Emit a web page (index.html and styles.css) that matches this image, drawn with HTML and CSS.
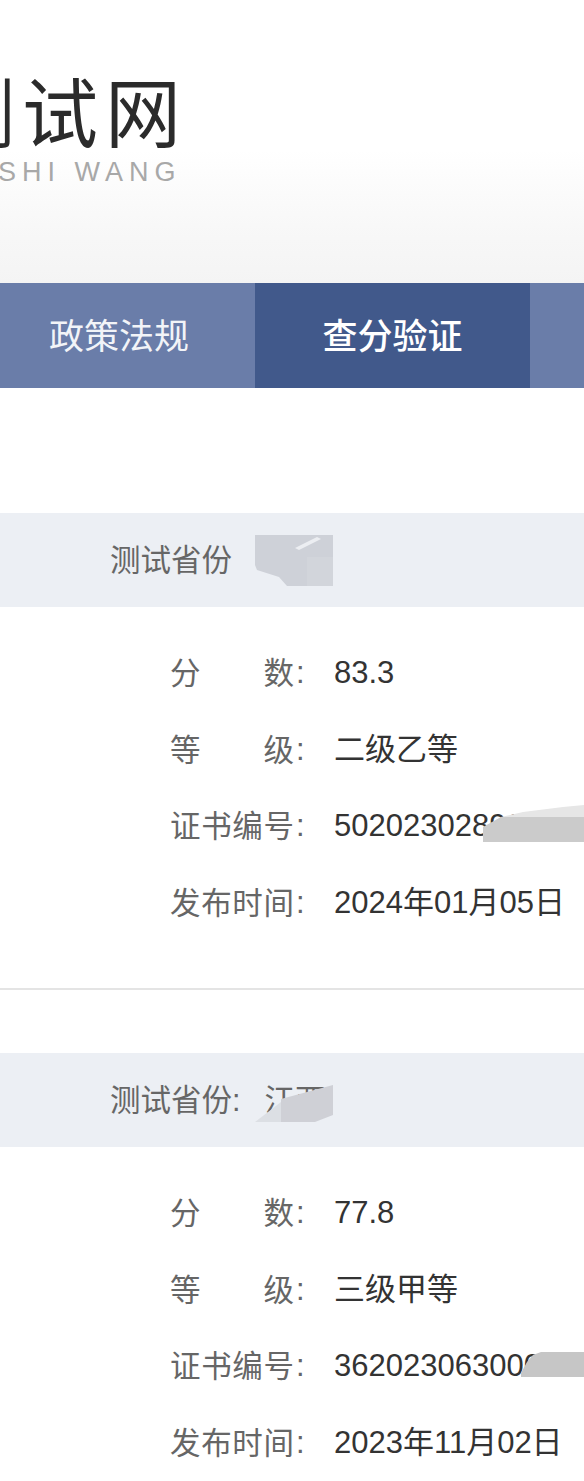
FILE: index.html
```html
<!DOCTYPE html>
<html lang="zh-CN">
<head>
  <meta charset="UTF-8">
  <title>查分验证</title>
  <link rel="stylesheet" href="styles.css">
</head>
<body>
  <div class="header">
    <div class="logo">测试网</div>
    <div class="logo-en">SHI WANG</div>
  </div>

  <div class="nav">
    <div class="tab tab-first">政策法规</div>
    <div class="tab active">查分验证</div>
    <div class="tab tab-rest"></div>
  </div>

  <div class="result first">
    <div class="band">
      测试省份
      <svg class="blot blot-a" width="78" height="51">
        <polygon points="0,0 78,0 78,51 32,51 24,42 2,35 0,30" fill="#ced1d8"/>
        <polygon points="52,22 78,22 78,51 52,51" fill="#d2d5db"/>
        <polygon points="40,13 62,2 66,4 44,15" fill="#eceef2"/>
      </svg>
    </div>
    <div class="rows">
      <div class="row"><span class="label">分数</span><span class="colon">:</span><span class="value">83.3</span></div>
      <div class="row"><span class="label">等级</span><span class="colon">:</span><span class="value">二级乙等</span></div>
      <div class="row">
        <span class="label">证书编号</span><span class="colon">:</span><span class="value">50202302890000</span>
        <svg class="blot blot-b" width="101" height="37">
          <polygon points="0,22 18,12 40,7 80,2 101,0 101,12 18,12" fill="#e6e6e6"/>
          <polygon points="0,22 18,12 101,12 101,37 0,37" fill="#cbcbcb"/>
        </svg>
      </div>
      <div class="row"><span class="label">发布时间</span><span class="colon">:</span><span class="value">2024年01月05日</span></div>
    </div>
  </div>

  <div class="result">
    <div class="band">
      测试省份:<span class="province">江西</span>
      <svg class="blot blot-c" width="78" height="37">
        <polygon points="0,37 26,17 26,37" fill="#dcdfe4"/>
        <polygon points="26,14 78,0 78,30 60,37 26,37" fill="#cfd0d6"/>
      </svg>
    </div>
    <div class="rows">
      <div class="row"><span class="label">分数</span><span class="colon">:</span><span class="value">77.8</span></div>
      <div class="row"><span class="label">等级</span><span class="colon">:</span><span class="value">三级甲等</span></div>
      <div class="row">
        <span class="label">证书编号</span><span class="colon">:</span><span class="value">36202306300000</span>
        <svg class="blot blot-d" width="63" height="25">
          <polygon points="0,25 0,21 6,10 12,3 20,0 63,0 63,25" fill="#c6c6c6"/>
        </svg>
      </div>
      <div class="row"><span class="label">发布时间</span><span class="colon">:</span><span class="value">2023年11月02日</span></div>
    </div>
  </div>
</body>
</html>
```

FILE: styles.css
```css
html, body {
  margin: 0;
  height: 1481px;
  overflow: hidden;
}

body {
  background: #fff;
  font-family: "Liberation Sans", "Noto Sans CJK SC", sans-serif;
  font-size: 31px;
}

.header {
  height: 283px;
  box-sizing: border-box;
  padding-top: 71px;
  overflow: hidden;
  background: linear-gradient(#fff 0, #fff 150px, #f8f8f8 225px, #f4f4f4 100%);
}

.logo {
  margin-left: -61px;
  font-family: "Noto Sans CJK SC", serif;
  font-size: 76px;
  line-height: 76px;
  letter-spacing: 7px;
  color: #2b2b2b;
  white-space: nowrap;
}

.logo-en {
  margin: 11px 0 0 -2px;
  font-size: 27px;
  line-height: 28px;
  letter-spacing: 6px;
  color: #a8a8a8;
  white-space: nowrap;
}

.nav {
  display: flex;
  height: 105px;
  background: #6a7da9;
  color: #f2f4f8;
}

.tab {
  flex: none;
  box-sizing: border-box;
  width: 275px;
  font-size: 35px;
  line-height: 107px;
  text-align: center;
}

.tab-first {
  width: 255px;
  padding-right: 17px;
}

.tab-rest {
  flex: 1;
}

.tab.active {
  background: #41598b;
  color: #fff;
  font-weight: 500;
}

.result {
  margin-top: 63px;
}

.result.first {
  margin-top: 125px;
}

.band {
  position: relative;
  height: 94px;
  padding-left: 110px;
  background: #eceff4;
  font-size: 30.5px;
  line-height: 94px;
  color: #666;
}

.province {
  margin-left: 24px;
}

.rows {
  padding: 28px 0 47px 170px;
  border-bottom: 2px solid #e4e4e4;
}

.result:last-child .rows {
  border-bottom: 0;
}

.row {
  position: relative;
  display: flex;
  height: 76.5px;
  line-height: 76.5px;
  white-space: nowrap;
}

.label {
  flex: none;
  width: 124px;
  color: #666;
  font-size: 30.5px;
  text-align: justify;
  text-align-last: justify;
}

.colon {
  flex: none;
  width: 40px;
  padding-left: 2px;
  box-sizing: border-box;
  color: #666;
}

.value {
  color: #333;
}

.blot {
  position: absolute;
  display: block;
}

.blot-a {
  left: 255px;
  top: 22px;
}

.blot-b {
  left: 313px;
  top: 17px;
}

.blot-c {
  left: 255px;
  top: 32px;
}

.blot-d {
  left: 351px;
  top: 24px;
}
```
